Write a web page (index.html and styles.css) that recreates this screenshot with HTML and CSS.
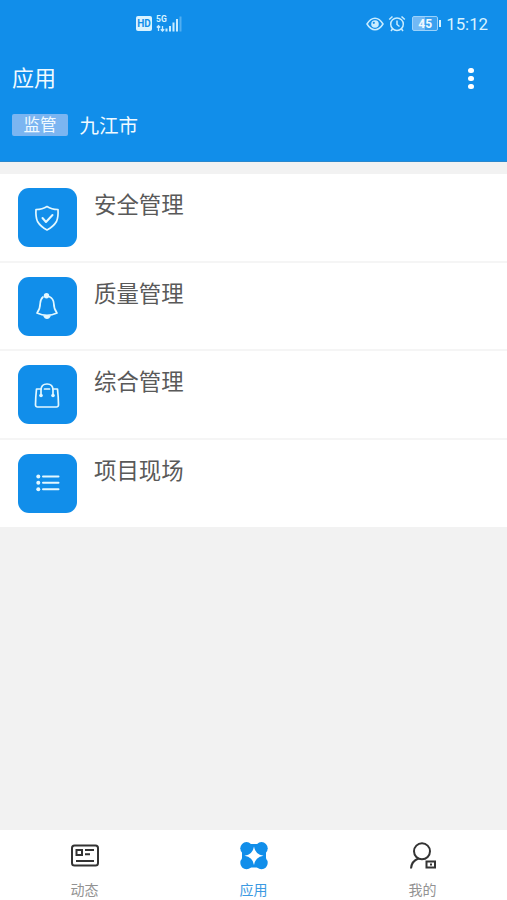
FILE: index.html
```
<!DOCTYPE html>
<html lang="zh-CN">

    <head>
        <meta charset="UTF-8">
        <meta name="viewport" content="width=device-width, initial-scale=1.0">
        <title>应用</title>
        <link rel="stylesheet" href="styles.css">
    </head>

    <body>
        <div class="header">
            <div class="status">
                <div class="status-left">
                    <span class="hd">HD</span>
                    <div class="signal">
                        <span class="net">5G</span>
                        <svg width="26" height="17" viewBox="0 0 26 17">
                            <path class="arrows" d="M2.5 16v-5M.8 12.5l1.7-1.8 1.7 1.8M6.5 11v5M4.8 14.3l1.7 1.8 1.7-1.8" />
                            <path class="bars" d="M10.5 16.5v-3M14 16.5v-5.5M17.5 16.5v-9M21 16.5V4" />
                            <path class="bars bar-off" d="M24.5 16.5V1.5" />
                        </svg>
                    </div>
                </div>
                <div class="status-right">
                    <svg width="18" height="14" viewBox="0 0 18 14">
                        <path class="line" d="M1 7Q4.5 1.2 9 1.2T17 7Q13.5 12.8 9 12.8T1 7z" />
                        <circle class="solid" cx="9" cy="7" r="3.8" />
                        <circle class="pupil" cx="7.8" cy="5.8" r="1.1" />
                    </svg>
                    <svg class="alarm" width="18" height="17" viewBox="0 0 18 17">
                        <circle class="line" cx="9" cy="9.2" r="6.3" />
                        <path class="line" d="M9 5.5v4l2.5 2M1.2 4.5L4.5 1.5M13.5 1.5l3.3 3M4.5 14l-1.5 2M13.5 14l1.5 2" />
                    </svg>
                    <div class="battery"><span>45</span></div>
                    <span class="time">15:12</span>
                </div>
            </div>
            <div class="bar">
                <div class="title">应用</div>
                <div class="more"><i></i><i></i><i></i></div>
            </div>
            <div class="place">
                <span class="tag">监管</span>
                <span class="city">九江市</span>
            </div>
        </div>

        <div class="list">
            <div class="item">
                <div class="icon">
                    <svg width="28" height="28" viewBox="0 0 28 28">
                        <path d="M14 2.5Q18.5 5.5 25 5.5Q25.5 13 23.5 17.5Q20.5 22.5 14 26Q7.5 22.5 4.5 17.5Q2.5 13 3 5.5Q9.5 5.5 14 2.5z" />
                        <path class="bold" d="M9.5 14l3.5 4 6.5-7" />
                    </svg>
                </div>
                <div class="name">安全管理</div>
            </div>
            <div class="item">
                <div class="icon">
                    <svg width="28" height="28" viewBox="0 0 28 28">
                        <path d="M10 5Q7.5 7 7.2 11.5Q7.2 17 4 21Q9 23.3 14 23.3T24 21Q20.8 17 20.8 11.5Q20.5 6.5 16.5 4.7" />
                        <circle class="fill" cx="13.5" cy="3.8" r="2.7" />
                        <path class="fill" d="M10 23.5h8Q16.5 27 14 27T10 23.5z" />
                    </svg>
                </div>
                <div class="name">质量管理</div>
            </div>
            <div class="item">
                <div class="icon">
                    <svg width="28" height="28" viewBox="0 0 28 28">
                        <path d="M8 8H3.5Q2.6 16 2.5 24Q2.700 26 4.500 26H23.500Q25.300 26 25.500 24Q25.400 16 24.500 8H20M11.500 8h5" />
                        <path d="M8 14V9Q8 3 14 3T20 9v5" />
                        <circle class="fill" cx="8" cy="14.500" r="1.800" />
                        <circle class="fill" cx="20" cy="14.500" r="1.800" />
                    </svg>
                </div>
                <div class="name">综合管理</div>
            </div>
            <div class="item">
                <div class="icon">
                    <svg width="28" height="28" viewBox="0 0 28 28">
                        <path class="bold" d="M10 7.5h15.5M10 13.8h15.5M10 20.2h15.5" />
                        <circle class="fill" cx="5.3" cy="7.5" r="2" />
                        <circle class="fill" cx="5.3" cy="13.8" r="2" />
                        <circle class="fill" cx="5.3" cy="20.2" r="2" />
                    </svg>
                </div>
                <div class="name">项目现场</div>
            </div>
        </div>

        <div class="tabs">
            <div class="tab">
                <svg width="30" height="30" viewBox="0 0 30 30">
                    <rect x="2" y="4.5" width="26" height="20" rx="2.5" />
                    <rect x="6.5" y="9" width="5.5" height="5" />
                    <path d="M15 9h9M15 13.3h5M6 20h18" />
                </svg>
                <span>动态</span>
            </div>
            <div class="tab active">
                <svg width="30" height="30" viewBox="0 0 30 30">
                    <rect class="body" x="6" y="3" width="18" height="23.5" />
                    <rect class="body" x="3" y="8" width="24" height="14" />
                    <circle class="petal" cx="7.5" cy="7.3" r="6.2" />
                    <circle class="petal" cx="22.5" cy="7.3" r="6.2" />
                    <circle class="petal" cx="7.5" cy="22" r="6.2" />
                    <circle class="petal" cx="22.5" cy="22" r="6.2" />
                    <path class="star" d="M15 5.5Q16.2 13.5 24.5 14.8Q16.2 16 15 24Q13.8 16 5.5 14.8Q13.8 13.5 15 5.5z" />
                </svg>
                <span>应用</span>
            </div>
            <div class="tab">
                <svg width="30" height="30" viewBox="0 0 30 30">
                    <circle cx="14" cy="10.3" r="8" />
                    <path d="M10.5 17.5Q3.5 20 3 27.5" />
                    <rect x="18.5" y="20.5" width="8.5" height="6" />
                    <path d="M22 23.5h2" />
                </svg>
                <span>我的</span>
            </div>
        </div>
    </body>

</html>
```
FILE: styles.css
```
body {
    margin: 0;
    padding: 0;
    height: 900px;
    display: flex;
    flex-direction: column;
    background-color: #f2f2f2;
    font-family: "Noto Sans CJK SC", sans-serif;
    overflow: hidden;
}

.header {
    height: 162px;
    box-sizing: border-box;
    background-color: #118eea;
    border-bottom: 1px solid #2a88cd;
    color: #f0faff;
}

.status {
    height: 47px;
    display: flex;
    justify-content: space-between;
    align-items: center;
    padding: 0 19px 0 136px;
    box-sizing: border-box;
}

.status-left,
.status-right {
    display: flex;
    align-items: center;
}

.hd {
    width: 16px;
    height: 15px;
    border-radius: 2px;
    background-color: #d9f3ff;
    color: #118eea;
    font: bold 10px/15px Roboto, sans-serif;
    text-align: center;
}

.signal {
    display: grid;
    margin-left: 4px;
}

.signal svg,
.net {
    grid-area: 1 / 1;
}

.net {
    font: bold 8.5px/8px Roboto, sans-serif;
    color: #d9f3ff;
}

.status svg {
    fill: none;
    stroke: #c9ecff;
}

.arrows {
    stroke-width: 1.3;
}

.bars {
    stroke-width: 2;
}

.bar-off {
    opacity: 0.35;
}

.status .line {
    stroke-width: 1.5;
}

.solid {
    fill: #c9ecff;
    stroke: none;
}

.pupil {
    fill: #118eea;
    stroke: none;
}

.alarm {
    margin-left: 4px;
}

.battery {
    display: flex;
    align-items: center;
    margin-left: 6px;
}

.battery span {
    width: 24px;
    height: 13px;
    border: 1px solid #9bd2fb;
    border-radius: 2px;
    background: linear-gradient(90deg, #72b9f5 50%, #3aa0ef 50%);
    font: bold 12px/14px Roboto, sans-serif;
    text-align: center;
}

.battery::after {
    content: "";
    width: 2px;
    height: 7px;
    margin-left: 1px;
    background-color: #d9f3ff;
}

.time {
    margin-left: 5px;
    font: 16.8px/20px Roboto, sans-serif;
    color: #d9f3ff;
}

.bar {
    height: 60px;
    display: flex;
    justify-content: space-between;
    align-items: center;
    padding: 0 33.5px 0 12px;
}

.title {
    font-size: 22px;
    line-height: 32px;
    margin-top: -2px;
}

.more {
    display: flex;
    flex-direction: column;
    gap: 2.5px;
    padding-top: 3px;
}

.more i {
    width: 5.5px;
    height: 5.5px;
    border-radius: 50%;
    background-color: white;
}

.place {
    display: flex;
    align-items: center;
    padding: 0 12px;
}

.tag {
    width: 56px;
    height: 22px;
    margin-top: 4px;
    border-radius: 2px;
    background-color: #7bb5f1;
    font-size: 16.5px;
    line-height: 21px;
    text-align: center;
}

.city {
    margin: 4px 0 0 11.5px;
    font-size: 19.5px;
    line-height: 28px;
}

.list {
    margin-top: 12px;
    background-color: white;
}

.item {
    height: 88.5px;
    box-sizing: border-box;
    display: flex;
    padding: 14px 17.5px;
    border-bottom: 2px solid #f5f5f5;
}

.item:last-child {
    height: 87px;
    border-bottom: none;
}

.icon {
    width: 59px;
    height: 59px;
    border-radius: 11px;
    background-color: #118eea;
    display: flex;
    justify-content: center;
    align-items: center;
}

.icon svg {
    fill: none;
    stroke: #e3f8ff;
    stroke-width: 1.7;
    stroke-linecap: round;
    stroke-linejoin: round;
}

.icon .bold {
    stroke-width: 2;
}

.icon .fill {
    fill: #e3f8ff;
    stroke: none;
}

.name {
    margin-left: 17.5px;
    font-size: 22.4px;
    line-height: 31px;
    color: #595959;
}

.tabs {
    height: 70px;
    margin-top: auto;
    display: flex;
    background-color: white;
}

.tab {
    flex: 1;
    display: flex;
    flex-direction: column;
    align-items: center;
    padding-top: 11px;
    font-size: 14px;
    line-height: 20px;
    color: #929292;
}

.tab svg {
    fill: none;
    stroke: #333;
    stroke-width: 2;
}

.tab span {
    margin-top: 8px;
}

.active {
    color: #3c9ae2;
}

.active .body,
.active .petal {
    fill: #118eea;
    stroke: none;
}

.active .star {
    fill: white;
    stroke: none;
}
```
